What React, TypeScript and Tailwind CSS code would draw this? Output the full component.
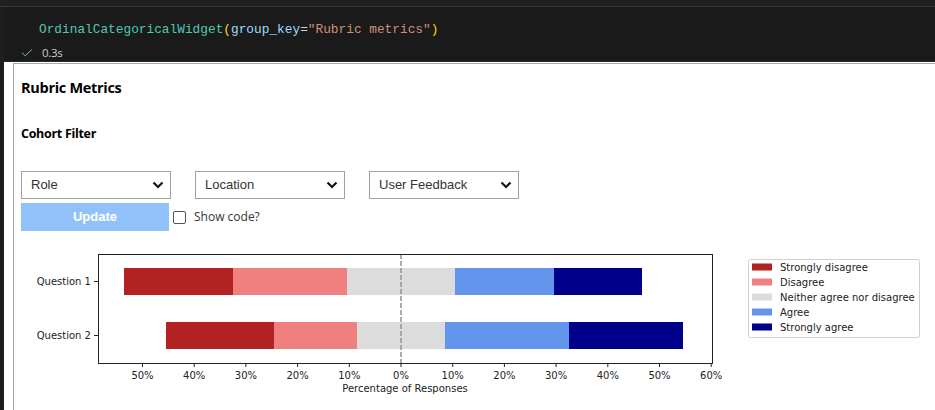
import { Check } from 'lucide-react'

const ticks = [50, 40, 30, 20, 10, 0, 10, 20, 30, 40, 50, 60]
const tickX = [-50, -40, -30, -20, -10, 0, 10, 20, 30, 40, 50, 60].map((v) => 401 + v * 5.17)

// [start, end] in px for each segment, left to right
const rows = [
    { label: 'Question 1', y: 268, segs: [124, 233, 347, 455, 554, 642] },
    { label: 'Question 2', y: 322, segs: [166, 274, 357, 445, 569, 683] },
]

const legend = [
    { name: 'Strongly disagree', color: '#b22222' },
    { name: 'Disagree', color: '#f08080' },
    { name: 'Neither agree nor disagree', color: '#dcdcdc' },
    { name: 'Agree', color: '#6495ed' },
    { name: 'Strongly agree', color: '#00008b' },
]

function Chevron() {
    return (
        <svg width="12" height="8" viewBox="0 0 12 8">
            <path d="M1.5 1.5 L6 6 L10.5 1.5" fill="none" stroke="#111" strokeWidth="2.2" />
        </svg>
    )
}

function Select({ label }: { label: string }) {
    return (
        <div className="w-[150px] h-[28px] border border-[#a0a0a0] flex items-center justify-between pl-[9px] pr-[6px] text-[13px] text-[#333] font-['Liberation_Sans',sans-serif]">
            <span>{label}</span>
            <Chevron />
        </div>
    )
}

function Chart() {
    return (
        <svg width="914" height="170" viewBox="21 240 914 170" className="block" fontFamily="'DejaVu Sans', sans-serif" fontSize="10" fill="#222">
            {rows.map((r) => (
                <g key={r.label}>
                    {legend.map((l, i) => (
                        <rect key={l.name} x={r.segs[i]} y={r.y} width={r.segs[i + 1] - r.segs[i]} height={27} fill={l.color} />
                    ))}
                    <line x1="94" x2="98" y1={r.y + 13.5} y2={r.y + 13.5} stroke="#222" />
                    <text x="91" y={r.y + 17} textAnchor="end">{r.label}</text>
                </g>
            ))}
            <line x1="401" x2="401" y1="254" y2="363" stroke="#999" strokeWidth="1.6" strokeDasharray="5 2" />
            <rect x="98.5" y="254.5" width="614" height="109" fill="none" stroke="#222" />
            {ticks.map((t, i) => (
                <g key={i}>
                    <line x1={tickX[i]} x2={tickX[i]} y1="364" y2="367" stroke="#222" />
                    <text x={tickX[i]} y="379" textAnchor="middle">{t}%</text>
                </g>
            ))}
            <text x="405" y="392" textAnchor="middle">Percentage of Responses</text>

            <rect x="748.5" y="259.5" width="171" height="78" rx="2" fill="#fff" stroke="#d0d0d0" />
            {legend.map((l, i) => (
                <g key={l.name}>
                    <rect x="752" y={263.5 + i * 15} width="20" height="7" fill={l.color} />
                    <text x="780" y={271 + i * 15}>{l.name}</text>
                </g>
            ))}
        </svg>
    )
}

export default function App() {
    return (
        <div className="w-[935px] h-[410px] overflow-hidden bg-[#1f1f1f] flex flex-col">
            <div className="h-[7px] bg-[#202020] border-b border-[#38383f] shrink-0" />
            <div className="flex flex-1 min-h-0">
                <div className="w-[4px] bg-[#1e1e1e] shrink-0" />
                <div className="flex-1 flex flex-col min-w-0">
                    {/* code cell */}
                    <div className="h-[55px] bg-[#1a1a1a] border-b border-[#2a2a2a] shrink-0 relative">
                        <div className="pl-[35px] pt-[14px] text-[12.8px] leading-[18px] font-['Liberation_Mono',monospace] whitespace-pre">
                            <span className="text-[#4ec9b0]">OrdinalCategoricalWidget</span>
                            <span className="text-[#ffd700]">(</span>
                            <span className="text-[#9cdcfe]">group_key</span>
                            <span className="text-[#d4d4d4]">=</span>
                            <span className="text-[#ce9178]">"Rubric metrics"</span>
                            <span className="text-[#ffd700]">)</span>
                        </div>
                        <div className="flex items-center pl-[16px] mt-[5px] gap-[8px]">
                            <Check size={14} strokeWidth={1.6} className="text-[#89d185]" />
                            <span className="text-[11.5px] text-[#cccccc] font-['Open_Sans',sans-serif] tracking-[-0.3px]">0.3s</span>
                        </div>
                    </div>
                    {/* output */}
                    <div className="flex-1 bg-white pl-[9px] pt-[1px] min-h-0">
                        <div className="h-full border-l border-t border-[#a8a8a8] pl-[7px] flex flex-col">
                            <div className="mt-[14px] text-[14.5px] leading-[20px] font-bold text-black font-['Open_Sans',sans-serif] tracking-[-0.3px]">Rubric Metrics</div>
                            <div className="mt-[27px] text-[12.5px] leading-[18px] font-bold text-black font-['Open_Sans',sans-serif] tracking-[-0.3px]">Cohort Filter</div>
                            <div className="mt-[28px] flex gap-[24px]">
                                <Select label="Role" />
                                <Select label="Location" />
                                <Select label="User Feedback" />
                            </div>
                            <div className="mt-[4px] flex items-center">
                                <div className="w-[148px] h-[28px] bg-[#90c2f9] text-white font-bold text-[13px] flex items-center justify-center font-['Liberation_Sans',sans-serif]">Update</div>
                                <div className="ml-[4px] w-[13px] h-[13px] border border-[#555] rounded-[2px] bg-white" />
                                <span className="ml-[8px] text-[12px] text-[#333] font-['Open_Sans',sans-serif]">Show code?</span>
                            </div>
                            <div className="mt-[9px]">
                                <Chart />
                            </div>
                        </div>
                    </div>
                </div>
            </div>
        </div>
    )
}
